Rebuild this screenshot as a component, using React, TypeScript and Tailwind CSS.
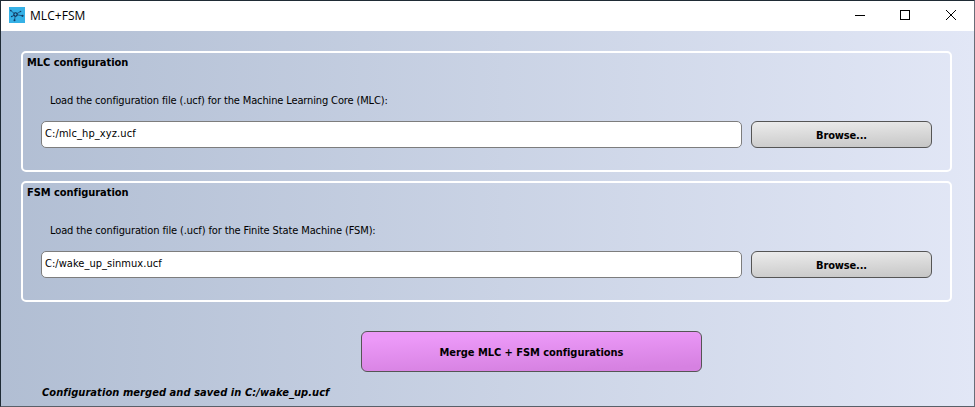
type GroupProps = { title: string; label: string; value: string; labelSpacing: string; valueSpacing: string };

const uiFont = "font-['Tahoma','DejaVu_Sans_Condensed','DejaVu_Sans',sans-serif] [font-stretch:condensed]";

function ConfigGroup({ title, label, value, labelSpacing, valueSpacing }: GroupProps) {
  return (
    <section className="h-[121px] w-[931px] rounded-[5px] border-2 border-white px-[18px]">
      <h2 className="-ml-[14px] h-[36px] pt-[2px] text-[11px] leading-[16px] font-bold whitespace-nowrap tracking-[-0.04px]">{title}</h2>
      <p className={`ml-[9px] h-[32px] pt-[4px] text-[11px] leading-[16px] whitespace-nowrap ${labelSpacing}`}>{label}</p>
      <div className="flex gap-[9px]">
        <div className={`h-[27px] w-[701px] rounded-[5px] border border-[#7d7d7d] bg-white pl-[3px] pt-[4px] text-[11px] leading-[16px] ${valueSpacing}`}>
          {value}
        </div>
        <button className="h-[27px] w-[181px] rounded-[6px] border border-[#555] bg-linear-[178deg] from-[#ececec] to-[#c6c6c6] pt-[2px] text-[11px] leading-[16px] font-bold tracking-[-0.15px]">
          Browse...
        </button>
      </div>
    </section>
  );
}

function AppIcon() {
  return (
    <svg width="16" height="16" viewBox="0 0 16 16" className="ml-[8px]">
      <rect width="16" height="16" fill="#35b1e6" />
      <path d="M6.5 7.5 1.7 3.5M6.5 7.5 11.5 4.5M6.5 7.5 2.7 9.5M6.5 7.5 13.5 8.8M6.5 7.5 5.5 13.2" stroke="#17466d" strokeWidth=".8" fill="none" />
      <circle cx="6.5" cy="7.5" r="1.7" fill="#35b1e6" stroke="#102c51" strokeWidth="1.1" />
      <g fill="#123b66">
        <circle cx="1.8" cy="3.6" r=".8" />
        <circle cx="11.5" cy="4.5" r=".8" />
        <circle cx="2.7" cy="9.5" r=".8" />
        <circle cx="13.5" cy="8.8" r="1.1" />
        <circle cx="5.5" cy="13.2" r="1" />
      </g>
    </svg>
  );
}

export default function App() {
  return (
    <div className={`flex h-[407px] w-[975px] flex-col overflow-hidden border border-t-[#1f2b35] border-r-[#686d78] border-b-[#596069] border-l-[#1f2b35] text-black ${uiFont}`}>
      <header className="flex h-[30px] shrink-0 items-center bg-white pb-[2px]">
        <AppIcon />
        <span className="ml-[5px] pt-[2px] font-['Segoe_UI','Open_Sans',sans-serif] text-[12px] leading-[16px] tracking-[0.05px] [font-stretch:normal]">MLC+FSM</span>
        <svg width="120" height="16" viewBox="0 0 120 16" className="mr-[5px] ml-auto" fill="none" stroke="#000" shapeRendering="crispEdges">
          <path d="M6 8.5H16" />
          <rect x="51.5" y="3.5" width="9" height="9" />
          <path d="M97 3 107 13M107 3 97 13" shapeRendering="auto" />
        </svg>
      </header>
      <main className="flex flex-1 flex-col bg-linear-to-r from-[#b1bed3] to-[#e2e7f6] pl-[20px] pt-[20px]">
        <div className="flex flex-col gap-[9px]">
          <ConfigGroup title="MLC configuration" label="Load the configuration file (.ucf) for the Machine Learning Core (MLC):" value="C:/mlc_hp_xyz.ucf" labelSpacing="tracking-[-0.135px]" valueSpacing="tracking-[0.1px]" />
          <ConfigGroup title="FSM configuration" label="Load the configuration file (.ucf) for the Finite State Machine (FSM):" value="C:/wake_up_sinmux.ucf" labelSpacing="tracking-[-0.115px]" valueSpacing="tracking-[0.04px]" />
        </div>
        <button className="mt-[29px] ml-[340px] h-[41px] w-[341px] shrink-0 rounded-[6px] border border-[#555] bg-linear-[178deg] from-[#ec99f8] from-15% to-[#d681e1] to-90% pt-[2px] text-[11px] leading-[16px] font-bold tracking-[-0.05px]">
          Merge MLC + FSM configurations
        </button>
        <p className="mt-[13px] ml-[21px] text-[11px] leading-[16px] font-bold whitespace-nowrap italic tracking-[0.07px]">Configuration merged and saved in C:/wake_up.ucf</p>
      </main>
    </div>
  );
}
